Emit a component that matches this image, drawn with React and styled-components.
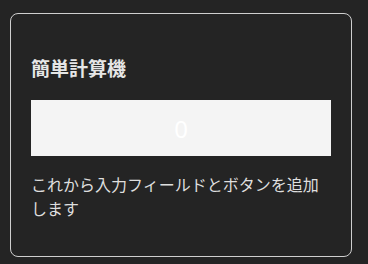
import React from 'react'
import styled, { createGlobalStyle } from 'styled-components'

const GlobalStyle = createGlobalStyle`
  html, body {
    margin: 0;
    padding: 0;
    background: #242424;
  }
  body {
    font-family: "Noto Sans CJK JP", "Noto Sans", sans-serif;
    color: rgba(255, 255, 255, 0.87);
  }
`

const Page = styled.div`
  padding: 13px 0 0 10px;
`

const Card = styled.div`
  width: 300px;
  padding: 20px;
  border: 1px solid #cfcfcf;
  border-radius: 8px;
`

const Title = styled.h3`
  font-size: 19px;
  font-weight: bold;
  margin: 18.72px 0;
  line-height: 29px;
  color: #e6e6e6;
`

const Display = styled.div`
  height: 56px;
  background: #f4f4f4;
  display: flex;
  align-items: center;
  justify-content: center;
  color: #ffffff;
  font-size: 24px;
  font-family: "Noto Sans", sans-serif;
`

const Note = styled.p`
  margin: 16px 0;
  font-size: 16px;
  line-height: 24px;
  color: #dedede;
`

function App() {
  return (
    <Page>
      <GlobalStyle />
      <Card>
        <Title>簡単計算機</Title>
        <Display>0</Display>
        <Note>これから入力フィールドとボタンを追加します</Note>
      </Card>
    </Page>
  )
}

export default App
